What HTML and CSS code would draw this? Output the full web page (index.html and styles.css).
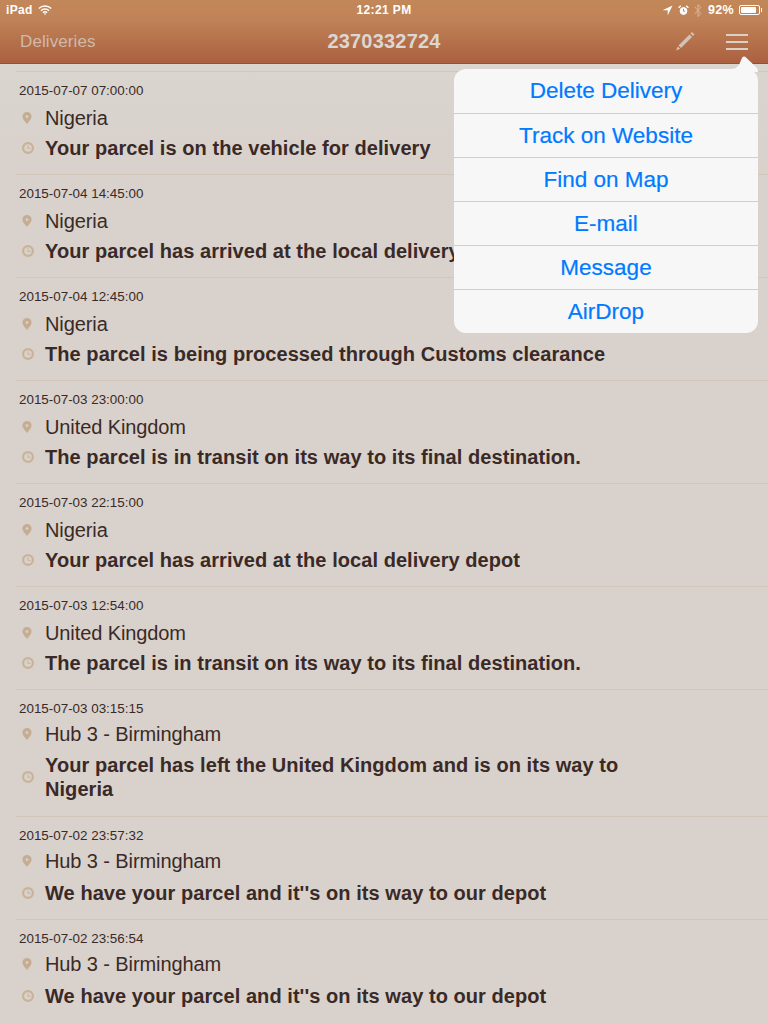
FILE: index.html
```html
<!DOCTYPE html>
<html lang="en">
<head>
    <meta charset="UTF-8">
    <meta name="viewport" content="width=device-width, initial-scale=1.0">
    <title>Delivery 2370332724</title>
    <link rel="stylesheet" href="styles.css">
</head>
<body>

<svg class="icon-defs" width="0" height="0">
    <symbol id="pin" viewBox="0 0 10 12">
        <path fill-rule="evenodd" d="M5 0a4.6 4.6 0 0 1 4.6 4.6C9.6 7.4 6.6 10 5 12 3.4 10 .4 7.4 .4 4.6A4.6 4.6 0 0 1 5 0zm0 3.2a1.4 1.4 0 1 0 0 2.8 1.4 1.4 0 0 0 0-2.8z"/>
    </symbol>
    <symbol id="clock" viewBox="0 0 12 12">
        <circle cx="6" cy="6" r="4.9" fill="none" stroke="currentColor" stroke-width="2.2"/>
        <path d="M6 3.4V6.4H8.4" fill="none" stroke="currentColor" stroke-width="1"/>
    </symbol>
</svg>

<header class="topbar">
    <div class="status-bar">
        <div class="status-left">
            <span>iPad</span>
            <svg class="wifi" width="14" height="10" viewBox="0 0 14 10">
                <path d="M.8 3.6a8.8 8.8 0 0 1 12.4 0M2.9 5.7a5.8 5.8 0 0 1 8.2 0M4.9 7.7a2.9 2.9 0 0 1 4.2 0" fill="none" stroke="#fff" stroke-width="1.4"/>
                <path d="M7 10 5.8 8.7a1.8 1.8 0 0 1 2.4 0z" fill="#fff"/>
            </svg>
        </div>
        <div class="status-time">12:21 PM</div>
        <div class="status-right">
            <svg width="11" height="11" viewBox="0 0 11 11"><path d="M10.5 .5 .5 5.2H5.7V10.5z" fill="#fff"/></svg>
            <svg width="11" height="11" viewBox="0 0 11 11">
                <circle cx="5.5" cy="6" r="3.4" fill="#fff" stroke="#fff" stroke-width="1"/>
                <path d="M5.5 3.8v2.4H7.2" fill="none" stroke="#b97f55" stroke-width=".9"/>
                <path d="M.6 2.8 2.8 .8M10.4 2.8 8.2 .8" stroke="#fff" stroke-width="1.3"/>
            </svg>
            <svg class="bluetooth" width="8" height="15" viewBox="0 0 8 15"><path d="M.8 4 6.8 10.5 4 13.5V1.5L6.8 4.5 .8 11" fill="none" stroke="#fff" stroke-width="1"/></svg>
            <span class="status-battery-text">92%</span>
            <div class="battery"><div class="battery-fill"></div></div>
        </div>
    </div>
    <div class="nav-bar">
        <a class="nav-back">Deliveries</a>
        <div class="nav-title">2370332724</div>
        <div class="nav-actions">
            <svg class="pencil" width="19" height="19" viewBox="0 0 19 19">
                <path d="M13.5 2.5 16 5 5 16 2.5 13.5z"/>
                <path d="M14.5 1.5 16 0 18.5 2.5 17 4z"/>
                <path d="M1.8 14.4 4.2 16.8 0 18.4z"/>
            </svg>
            <div class="menu-icon"><span></span><span></span><span></span></div>
        </div>
    </div>
</header>

<main class="events">
    <section class="event">
        <div class="event-date">2015-07-07 07:00:00</div>
        <div class="event-row event-place"><svg class="pin"><use href="#pin"/></svg><span>Nigeria</span></div>
        <div class="event-row event-status"><svg class="clock"><use href="#clock"/></svg><span>Your parcel is on the vehicle for delivery</span></div>
    </section>
    <section class="event">
        <div class="event-date">2015-07-04 14:45:00</div>
        <div class="event-row event-place"><svg class="pin"><use href="#pin"/></svg><span>Nigeria</span></div>
        <div class="event-row event-status"><svg class="clock"><use href="#clock"/></svg><span>Your parcel has arrived at the local delivery depot</span></div>
    </section>
    <section class="event">
        <div class="event-date">2015-07-04 12:45:00</div>
        <div class="event-row event-place"><svg class="pin"><use href="#pin"/></svg><span>Nigeria</span></div>
        <div class="event-row event-status"><svg class="clock"><use href="#clock"/></svg><span>The parcel is being processed through Customs clearance</span></div>
    </section>
    <section class="event">
        <div class="event-date">2015-07-03 23:00:00</div>
        <div class="event-row event-place"><svg class="pin"><use href="#pin"/></svg><span>United Kingdom</span></div>
        <div class="event-row event-status"><svg class="clock"><use href="#clock"/></svg><span>The parcel is in transit on its way to its final destination.</span></div>
    </section>
    <section class="event">
        <div class="event-date">2015-07-03 22:15:00</div>
        <div class="event-row event-place"><svg class="pin"><use href="#pin"/></svg><span>Nigeria</span></div>
        <div class="event-row event-status"><svg class="clock"><use href="#clock"/></svg><span>Your parcel has arrived at the local delivery depot</span></div>
    </section>
    <section class="event">
        <div class="event-date">2015-07-03 12:54:00</div>
        <div class="event-row event-place"><svg class="pin"><use href="#pin"/></svg><span>United Kingdom</span></div>
        <div class="event-row event-status"><svg class="clock"><use href="#clock"/></svg><span>The parcel is in transit on its way to its final destination.</span></div>
    </section>
    <section class="event event-hub event-long">
        <div class="event-date">2015-07-03 03:15:15</div>
        <div class="event-row event-place"><svg class="pin"><use href="#pin"/></svg><span>Hub 3 - Birmingham</span></div>
        <div class="event-row event-status"><svg class="clock"><use href="#clock"/></svg><span>Your parcel has left the United Kingdom and is on its way to<br>Nigeria</span></div>
    </section>
    <section class="event event-hub">
        <div class="event-date">2015-07-02 23:57:32</div>
        <div class="event-row event-place"><svg class="pin"><use href="#pin"/></svg><span>Hub 3 - Birmingham</span></div>
        <div class="event-row event-status"><svg class="clock"><use href="#clock"/></svg><span>We have your parcel and it''s on its way to our depot</span></div>
    </section>
    <section class="event event-hub">
        <div class="event-date">2015-07-02 23:56:54</div>
        <div class="event-row event-place"><svg class="pin"><use href="#pin"/></svg><span>Hub 3 - Birmingham</span></div>
        <div class="event-row event-status"><svg class="clock"><use href="#clock"/></svg><span>We have your parcel and it''s on its way to our depot</span></div>
    </section>
</main>

<div class="popover">
    <svg class="popover-arrow" width="28" height="16" viewBox="0 0 28 16">
        <path d="M0 13C5 13 6 12 9 9L12 2C13 0 15 0 16 1.5L26 11C27.5 12.5 28 14 28 16H0z" fill="#f7f7f7"/>
    </svg>
    <a>Delete Delivery</a>
    <a>Track on Website</a>
    <a>Find on Map</a>
    <a>E-mail</a>
    <a>Message</a>
    <a>AirDrop</a>
</div>

</body>
</html>
```
FILE: styles.css
```css
body {
    font-family: "Liberation Sans", Arial, sans-serif;
    margin: 0;
    height: 1024px;
    overflow: hidden;
    position: relative;
    background: linear-gradient(#dad6d0, #d9d1cb 200px);
    color: #3a2a27;
}
.icon-defs {
    position: absolute;
}

/* top bar */
.topbar {
    height: 64px;
    box-sizing: border-box;
    background: linear-gradient(#c28859, #c08357 30%, #ab6040);
    border-bottom: 1px solid #7d5a45;
}
.status-bar {
    height: 20px;
    padding: 0 6px;
    display: grid;
    grid-template-columns: 1fr auto 1fr;
    align-items: center;
    color: white;
    font-size: 12px;
    font-weight: bold;
    letter-spacing: 0.3px;
}
.status-left {
    display: flex;
    align-items: center;
    gap: 5px;
}
.status-time {
    letter-spacing: 0.4px;
}
.status-right {
    display: flex;
    align-items: center;
    justify-content: flex-end;
    gap: 5px;
}
.status-battery-text {
    margin-left: 1px;
    font-size: 12.5px;
}
.bluetooth {
    opacity: 0.4;
}
.battery {
    width: 17px;
    height: 6px;
    margin-right: 2px;
    border: 1px solid white;
    border-radius: 2px;
    padding: 1px;
    position: relative;
}
.battery::after {
    content: "";
    position: absolute;
    top: 2px;
    right: -3px;
    width: 1px;
    height: 4px;
    background-color: white;
}
.battery-fill {
    width: 15px;
    height: 6px;
    background-color: white;
    border-radius: 1px;
}
.nav-bar {
    height: 43px;
    display: grid;
    grid-template-columns: 1fr auto 1fr;
    align-items: center;
    padding: 0 20px;
}
.nav-back {
    font-size: 17px;
    letter-spacing: 0.1px;
    color: #d0b9a9;
}
.nav-title {
    font-size: 20px;
    font-weight: bold;
    color: #dcd7d3;
    letter-spacing: 0.2px;
}
.nav-actions {
    display: flex;
    justify-content: flex-end;
    align-items: center;
    gap: 31px;
}
.pencil {
    fill: #d2c3b8;
}
.menu-icon {
    width: 22px;
    display: flex;
    flex-direction: column;
    gap: 5px;
}
.menu-icon span {
    height: 2px;
    background-color: #dccfc5;
}

/* list */
.events {
    padding-top: 7px;
}
.event {
    margin-left: 16px;
    height: 102px;
    border-top: 1px solid #d2c6b9;
}
.event-long {
    height: 126px;
}
.event-date {
    font-size: 13.4px;
    line-height: 14px;
    padding: 12px 0 5px 3px;
}
.event-hub .event-date {
    padding-bottom: 3px;
}
.event-hub .event-place {
    margin-bottom: 2px;
}
.event-row {
    display: flex;
    align-items: center;
    padding-left: 6px;
}
.event-place {
    height: 30px;
    font-size: 20px;
    letter-spacing: -0.1px;
}
.event-status {
    min-height: 30px;
    font-size: 20px;
    font-weight: bold;
    line-height: 24px;
    letter-spacing: 0.06px;
}
.event-long .event-status {
    padding-top: 2px;
}
.pin {
    width: 10px;
    height: 12px;
    margin-right: 13px;
    fill: #c5ad92;
    flex: none;
}
.clock {
    width: 12px;
    height: 12px;
    margin-right: 11px;
    color: #c9b398;
    flex: none;
}

/* popover */
.popover {
    position: absolute;
    top: 69px;
    left: 454px;
    width: 304px;
    background-color: #f7f7f7;
    border-radius: 12px;
}
.popover a {
    display: block;
    height: 44px;
    line-height: 44px;
    text-align: center;
    font-size: 22.5px;
    color: #007aff;
    -webkit-text-stroke: 0.2px #007aff;
    border-top: 1px solid #cfcfcf;
    box-sizing: border-box;
}
.popover a:first-of-type {
    border-top: none;
}
.popover-arrow {
    position: absolute;
    top: -13px;
    right: 0;
}
```
